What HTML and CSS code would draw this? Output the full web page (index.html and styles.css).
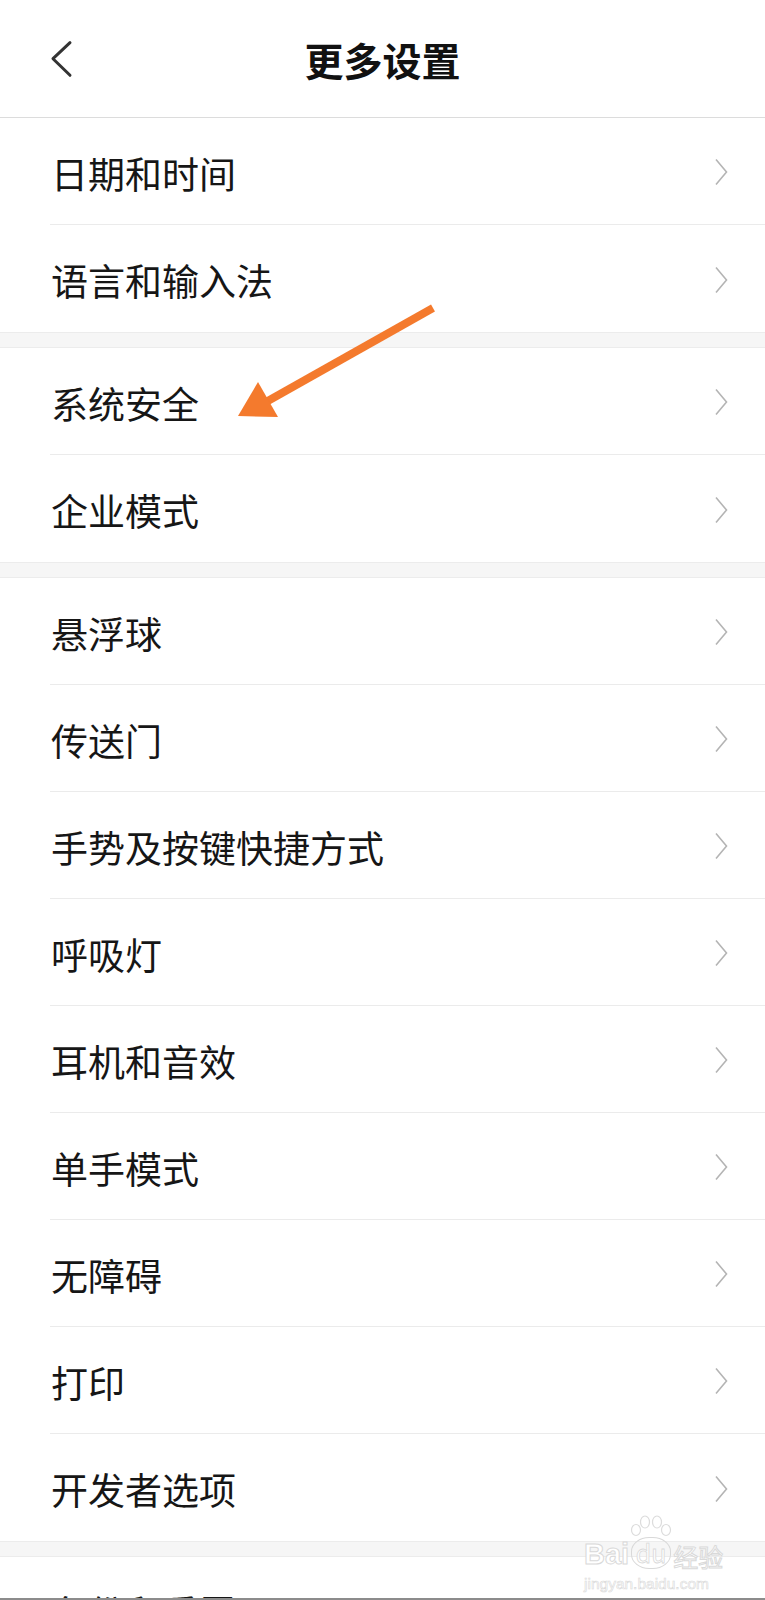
FILE: index.html
```html
<!DOCTYPE html>
<html lang="zh-CN">
<head>
  <meta charset="UTF-8" />
  <meta name="viewport" content="width=device-width, initial-scale=1.0" />
  <title>更多设置</title>
  <link rel="stylesheet" href="styles.css">
</head>
<body>
  <div class="page">
    <div class="header">
      <div class="back">
        <svg width="24" height="40" viewBox="0 0 24 40"><path d="M20 3.7 L3 19.7 L20 36.3" fill="none" stroke="#333" stroke-width="3" stroke-linecap="round" stroke-linejoin="round"/></svg>
      </div>
      <h1 class="title">更多设置</h1>
      <div></div>
    </div>

    <div class="group">
      <div class="row"><span>日期和时间</span><i class="arrow"></i></div>
      <div class="row"><span>语言和输入法</span><i class="arrow"></i></div>
    </div>
    <div class="gap"></div>

    <div class="group">
      <div class="row"><span>系统安全</span><i class="arrow"></i></div>
      <div class="row"><span>企业模式</span><i class="arrow"></i></div>
    </div>
    <div class="gap"></div>

    <div class="group">
      <div class="row"><span>悬浮球</span><i class="arrow"></i></div>
      <div class="row"><span>传送门</span><i class="arrow"></i></div>
      <div class="row"><span>手势及按键快捷方式</span><i class="arrow"></i></div>
      <div class="row"><span>呼吸灯</span><i class="arrow"></i></div>
      <div class="row"><span>耳机和音效</span><i class="arrow"></i></div>
      <div class="row"><span>单手模式</span><i class="arrow"></i></div>
      <div class="row"><span>无障碍</span><i class="arrow"></i></div>
      <div class="row"><span>打印</span><i class="arrow"></i></div>
      <div class="row"><span>开发者选项</span><i class="arrow"></i></div>
    </div>
    <div class="gap"></div>

    <div class="group">
      <div class="row"><span>备份和重置</span><i class="arrow"></i></div>
    </div>

    <!-- annotation arrow drawn over the screenshot -->
    <svg class="pointer" width="765" height="450" viewBox="0 0 765 450">
      <line x1="433" y1="308" x2="266" y2="402" stroke="#f47a2d" stroke-width="8"/>
      <polygon points="238,416 258,382 278,417" fill="#f47a2d"/>
    </svg>

    <div class="watermark">
      <div class="wm-logo">
        <span>Bai</span>
        <div class="wm-paw">
          <svg width="42" height="24" viewBox="0 0 42 24">
            <ellipse cx="6" cy="15" rx="4.5" ry="5.5" fill="#fff" stroke="#dcdcdc" stroke-width="1.2"/>
            <ellipse cx="15" cy="7" rx="4.5" ry="6" fill="#fff" stroke="#dcdcdc" stroke-width="1.2"/>
            <ellipse cx="27" cy="7" rx="4.5" ry="6" fill="#fff" stroke="#dcdcdc" stroke-width="1.2"/>
            <ellipse cx="36" cy="15" rx="4.5" ry="5.5" fill="#fff" stroke="#dcdcdc" stroke-width="1.2"/>
          </svg>
          <span class="wm-du">du</span>
        </div>
        <span>经验</span>
      </div>
      <div class="wm-url">jingyan.baidu.com</div>
    </div>
  </div>
  <div class="bottom-edge"></div>
</body>
</html>
```

FILE: styles.css
```css
* {
  box-sizing: border-box;
  margin: 0;
  padding: 0;
}

body {
  background: #fff;
  color: #111;
  font-family: "Noto Sans CJK SC", "Noto Sans", sans-serif;
}

.page {
  position: relative;
}

.header {
  display: grid;
  grid-template-columns: 1fr auto 1fr;
  align-items: center;
  height: 118px;
  border-bottom: 1px solid #dcdcdc;
  padding: 0 50px;
}

.back svg {
  display: block;
}

.title {
  font-size: 39px;
  font-weight: bold;
  color: #111;
  line-height: 1;
  margin-top: 2px;
}

.row {
  display: flex;
  align-items: center;
  justify-content: space-between;
  height: 107px;
  margin-left: 50px;
  padding-left: 1px;
  padding-right: 37px;
  border-bottom: 1px solid #ebebeb;
  font-size: 37px;
  color: #161616;
}

.row span {
  margin-top: 3px;
}

.group .row:last-child {
  border-bottom: none;
}

.arrow {
  width: 14px;
  height: 28px;
  background: url("data:image/svg+xml,%3Csvg xmlns='http://www.w3.org/2000/svg' width='14' height='28' viewBox='0 0 14 28'%3E%3Cpath d='M2 1.5 L12.5 14 L2 26.5' fill='none' stroke='%23b4b4b4' stroke-width='1.6'/%3E%3C/svg%3E") no-repeat;
  margin-top: 2px;
}

.gap {
  height: 16px;
  background: #f6f6f6;
  border-top: 1px solid #ececec;
  border-bottom: 1px solid #ececec;
}

.pointer {
  position: absolute;
  left: 0;
  top: 0;
}

.watermark {
  position: absolute;
  left: 584px;
  top: 1515px;
  width: 140px;
  white-space: nowrap;
  font-family: "Liberation Sans", Arial, sans-serif;
  color: #fff;
  -webkit-text-stroke: 1px #d9d9d9;
}

.wm-logo {
  display: flex;
  align-items: flex-end;
  font-size: 29px;
  font-weight: bold;
  line-height: 1;
}

.wm-logo span:last-child {
  font-family: "Noto Sans CJK SC", sans-serif;
  font-size: 25px;
  font-weight: normal;
}

.wm-paw {
  display: flex;
  flex-direction: column;
  align-items: center;
  margin: 0 1px;
}

.wm-paw svg {
  display: block;
  margin-bottom: -2px;
}

.wm-du {
  display: block;
  font-size: 17px;
  border: 1px solid #d9d9d9;
  border-radius: 45%;
  padding: 2px 4px 3px;
  -webkit-text-stroke: 0.8px #d9d9d9;
}

.wm-url {
  font-size: 15.5px;
  margin-top: 6px;
  -webkit-text-stroke: 0.6px #d9d9d9;
}

.bottom-edge {
  position: fixed;
  left: 0;
  right: 0;
  bottom: 0;
  height: 2px;
  background: #8c8c8c;
}
```
